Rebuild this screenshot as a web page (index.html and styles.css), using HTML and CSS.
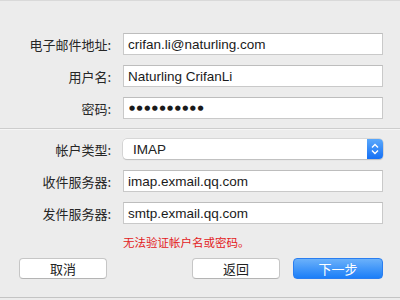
FILE: index.html
```html
<!DOCTYPE html>
<html>
<head>
  <meta charset="utf-8">
  <title>添加帐户</title>
  <link rel="stylesheet" href="styles.css">
</head>
<body>

  <div class="sheet">
    <div class="section account">
      <div class="row">
        <label>电子邮件地址:</label>
        <input class="field" value="crifan.li@naturling.com">
      </div>
      <div class="row">
        <label>用户名:</label>
        <input class="field" value="Naturling CrifanLi">
      </div>
      <div class="row">
        <label>密码:</label>
        <input class="field secret" value="●●●●●●●●●●">
      </div>
    </div>

    <div class="section servers">
      <div class="row">
        <label>帐户类型:</label>
        <div class="popup">
          <span>IMAP</span>
          <span class="stepper">
            <svg width="16" height="20" viewBox="0 0 16 20">
              <path d="M5 8.5 L8 5.5 L11 8.5" fill="none" stroke="#fff" stroke-width="1.4"/>
              <path d="M5 11.5 L8 14.5 L11 11.5" fill="none" stroke="#fff" stroke-width="1.4"/>
            </svg>
          </span>
        </div>
      </div>
      <div class="row">
        <label>收件服务器:</label>
        <input class="field" value="imap.exmail.qq.com">
      </div>
      <div class="row">
        <label>发件服务器:</label>
        <input class="field" value="smtp.exmail.qq.com">
      </div>
      <div class="error">无法验证帐户名或密码。</div>
    </div>

    <div class="buttons">
      <button class="btn">取消</button>
      <div class="right">
        <button class="btn">返回</button>
        <button class="btn primary">下一步</button>
      </div>
    </div>
  </div>

</body>
</html>
```

FILE: styles.css
```css
body {
  margin: 0;
  background: #ececec;
  font-family: "Liberation Sans", "Noto Sans CJK SC", sans-serif;
  color: #222;
}

.sheet {
  height: 298px;
  border-top: 1px solid #d9d9d9;
  border-bottom: 1px solid #c4c4c4;
  box-sizing: border-box;
}

.section {
  display: flex;
  flex-direction: column;
  gap: 10px;
  padding: 0 18px 0 8px;
}

.account {
  padding-top: 32px;
  padding-bottom: 9px;
  border-bottom: 1px solid #cdcdcd;
  box-shadow: 0 1px 0 #f6f6f6;
}

.servers {
  padding-top: 10px;
}

.row {
  display: grid;
  grid-template-columns: 103px 260px;
  column-gap: 12px;
  align-items: center;
}

.row label {
  text-align: right;
  font-family: "Noto Sans CJK SC", sans-serif;
  font-size: 13px;
  color: #262626;
}

.field {
  height: 22px;
  box-sizing: border-box;
  margin: 0;
  padding: 0 4px;
  border: 1px solid #c9c9c9;
  border-top-color: #bdbdbd;
  background: white;
  font-family: "Liberation Sans", sans-serif;
  font-size: 13.5px;
  color: #1a1a1a;
  outline: none;
}

.secret {
  font-family: "DejaVu Sans", sans-serif;
  font-size: 7px;
  letter-spacing: 1.5px;
  padding-left: 5px;
}

.popup {
  height: 20px;
  display: flex;
  justify-content: space-between;
  align-items: center;
  background: white;
  border-radius: 4px;
  box-shadow: 0 0 0 0.5px #c2c2c2, 0 1px 1px rgba(0,0,0,0.2);
  padding-left: 10px;
  margin-bottom: 1px;
  font-size: 13.5px;
}

.stepper {
  width: 16px;
  height: 20px;
  border-radius: 0 4px 4px 0;
  background: linear-gradient(#5aa8fb, #1570f5);
}

.stepper svg {
  display: block;
}

.error {
  margin-left: 115px;
  font-family: "Noto Sans CJK SC", sans-serif;
  font-size: 11.5px;
  line-height: 16px;
  color: #e3201b;
}

.buttons {
  display: flex;
  justify-content: space-between;
  padding: 8px 17px 0 19px;
}

.right {
  display: flex;
  gap: 13px;
}

.btn {
  width: 88px;
  height: 21px;
  padding: 0;
  background: white;
  border: 1px solid #c6c6c6;
  border-bottom-color: #b4b4b4;
  border-radius: 4px;
  font-family: "Noto Sans CJK SC", sans-serif;
  font-size: 13px;
  color: #222;
}

.primary {
  width: 90px;
  background: linear-gradient(#6bb1fa, #1b7ef8);
  border-color: #2a7ef0;
  color: white;
}
```
